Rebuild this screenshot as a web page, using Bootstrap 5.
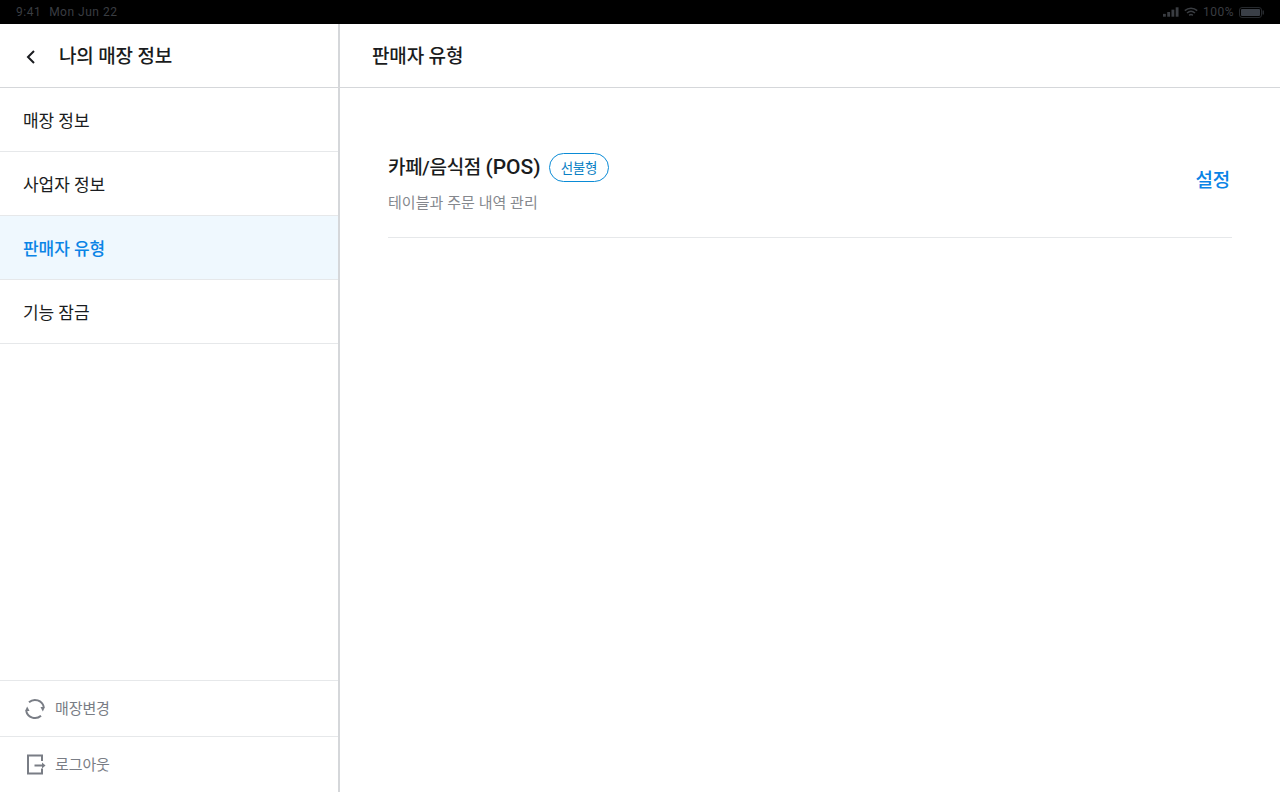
<!DOCTYPE html>
<html lang="ko">
<head>
    <meta charset="UTF-8">
    <meta name="viewport" content="width=device-width, initial-scale=1.0">
    <title>판매자 유형</title>
    <link href="https://cdn.jsdelivr.net/npm/bootstrap@5.3.0/dist/css/bootstrap.min.css" rel="stylesheet">
    <style>
        html, body {
            height: 100%;
        }
        body {
            font-family: Roboto, "Noto Sans CJK KR", "Noto Sans", sans-serif;
            color: #1a1c20;
            overflow: hidden;
        }
        /* iPad status bar */
        .status-bar {
            height: 24px;
            background: #000;
            color: #3a3d42;
            font-size: 12px;
            letter-spacing: .5px;
            padding: 0 16px;
        }
        .status-left {
            gap: 8px;
        }
        .status-right {
            gap: 5px;
        }
        .app-body {
            height: 768px;
        }
        .side-pane {
            width: 340px;
            border-right: 2px solid #d5d7da;
        }
        .pane-head {
            height: 64px;
            padding-top: 3px;
            border-bottom: 1px solid #d5d7da;
            font-size: 19px;
            font-weight: 500;
            letter-spacing: -.15px;
        }
        .side-head {
            padding-left: 23px;
            gap: 22px;
        }
        .main-head {
            padding-left: 32px;
        }
        .side-item {
            height: 64px;
            padding-left: 23px;
            padding-top: 5px;
            border-bottom: 1px solid #e6e8ea;
            font-size: 17px;
            letter-spacing: -.05px;
        }
        .side-item.is-active {
            background: #eff8fe;
            color: #0a84e6;
            font-weight: 500;
        }
        .side-foot {
            height: 56px;
            padding-left: 23px;
            padding-top: 1px;
            border-top: 1px solid #e6e8ea;
            gap: 8px;
            color: #797d85;
            font-size: 15px;
            letter-spacing: -.1px;
        }
        .seller-row {
            margin: 48px 48px 0;
            height: 102px;
            border-bottom: 1px solid #e6e8ea;
            padding-right: 2px;
            padding-bottom: 5px;
        }
        .seller-title {
            font-size: 19px;
            font-weight: 500;
            letter-spacing: -.3px;
            line-height: 28px;
        }
        .seller-latin {
            font-size: 21px;
            letter-spacing: 0;
        }
        .seller-pill {
            height: 29px;
            padding: 0 11px;
            border: 1px solid #0a8bd6;
            border-radius: 15px;
            color: #0a7fc4;
            font-size: 13.5px;
            letter-spacing: -.2px;
        }
        .seller-desc {
            margin-top: 10px;
            color: #85888e;
            font-size: 15px;
            letter-spacing: .05px;
        }
        .seller-link {
            color: #0a84e6;
            font-size: 19px;
            font-weight: 500;
            letter-spacing: -.2px;
            text-decoration: none;
            margin-bottom: 5px;
        }
    </style>
</head>
<body>

    <!-- status bar -->
    <div class="status-bar d-flex align-items-center justify-content-between">
        <div class="status-left d-flex"><span>9:41</span><span>Mon Jun 22</span></div>
        <div class="status-right d-flex align-items-center">
            <svg width="16" height="10" viewBox="0 0 17 10" fill="#3a3d42">
                <rect x="0" y="7" width="3" height="3"/>
                <rect x="4.500" y="5" width="3" height="5"/>
                <rect x="9" y="2.500" width="3" height="7.500"/>
                <rect x="13.500" y="0" width="3" height="10"/>
            </svg>
            <svg width="14" height="11" viewBox="0 0 14 11" fill="none" stroke="#3a3d42" stroke-width="1.500">
                <path d="M.8 3.600C4.400.3 9.600.3 13.200 3.600"/>
                <path d="M3 6c2.400-2.100 5.600-2.100 8 0"/>
                <path d="M5.200 8.300c1.100-.9 2.500-.9 3.600 0"/>
            </svg>
            <span>100%</span>
            <svg width="25" height="11" viewBox="0 0 25 11">
                <rect x=".5" y=".5" width="22" height="10" rx="2.500" fill="none" stroke="#26292d"/>
                <rect x="2" y="2" width="19" height="7" rx="1" fill="#3a3f47"/>
                <rect x="23.500" y="3.500" width="1.500" height="4" fill="#26292d"/>
            </svg>
        </div>
    </div>

    <div class="app-body d-flex">
        <!-- left menu -->
        <div class="side-pane d-flex flex-column flex-shrink-0">
            <div class="pane-head side-head d-flex align-items-center">
                <svg width="14" height="14" viewBox="0 0 14 14" fill="none" stroke="#1a1c20" stroke-width="2">
                    <path d="M11 1 5 7l6 6"/>
                </svg>
                <span>나의 매장 정보</span>
            </div>
            <div class="side-item d-flex align-items-center">매장 정보</div>
            <div class="side-item d-flex align-items-center">사업자 정보</div>
            <div class="side-item is-active d-flex align-items-center">판매자 유형</div>
            <div class="side-item d-flex align-items-center">기능 잠금</div>

            <div class="side-foot d-flex align-items-center mt-auto">
                <svg width="24" height="24" viewBox="0 0 24 24" fill="none" stroke="#797d85" stroke-width="2">
                    <path d="M6 5.300A9 9 0 0 1 20.800 10"/>
                    <path d="M18 18.700A9 9 0 0 1 3.200 14"/>
                    <path d="M17.500 10H22l-2.200 4.500z" fill="#797d85" stroke="none"/>
                    <path d="M2 14h4.500L4.200 9.500z" fill="#797d85" stroke="none"/>
                </svg>
                <span>매장변경</span>
            </div>
            <div class="side-foot d-flex align-items-center">
                <svg width="24" height="24" viewBox="0 0 24 24" fill="none" stroke="#797d85" stroke-width="2">
                    <path d="M19 8V2.500H5v18h14v-5"/>
                    <path d="M11.500 12.500H20"/>
                    <path d="M19 9.500l3.500 3-3.500 3z" fill="#797d85" stroke="none"/>
                </svg>
                <span>로그아웃</span>
            </div>
        </div>

        <!-- content -->
        <div class="flex-grow-1">
            <div class="pane-head main-head d-flex align-items-center">판매자 유형</div>
            <div class="seller-row d-flex align-items-center justify-content-between">
                <div>
                    <div class="d-flex align-items-center gap-2">
                        <span class="seller-title">카페/음식점 <span class="seller-latin">(POS)</span></span>
                        <span class="seller-pill d-inline-flex align-items-center">선불형</span>
                    </div>
                    <div class="seller-desc">테이블과 주문 내역 관리</div>
                </div>
                <a href="#" class="seller-link">설정</a>
            </div>
        </div>
    </div>

    <script src="https://cdn.jsdelivr.net/npm/bootstrap@5.3.0/dist/js/bootstrap.bundle.min.js"></script>
</body>
</html>
